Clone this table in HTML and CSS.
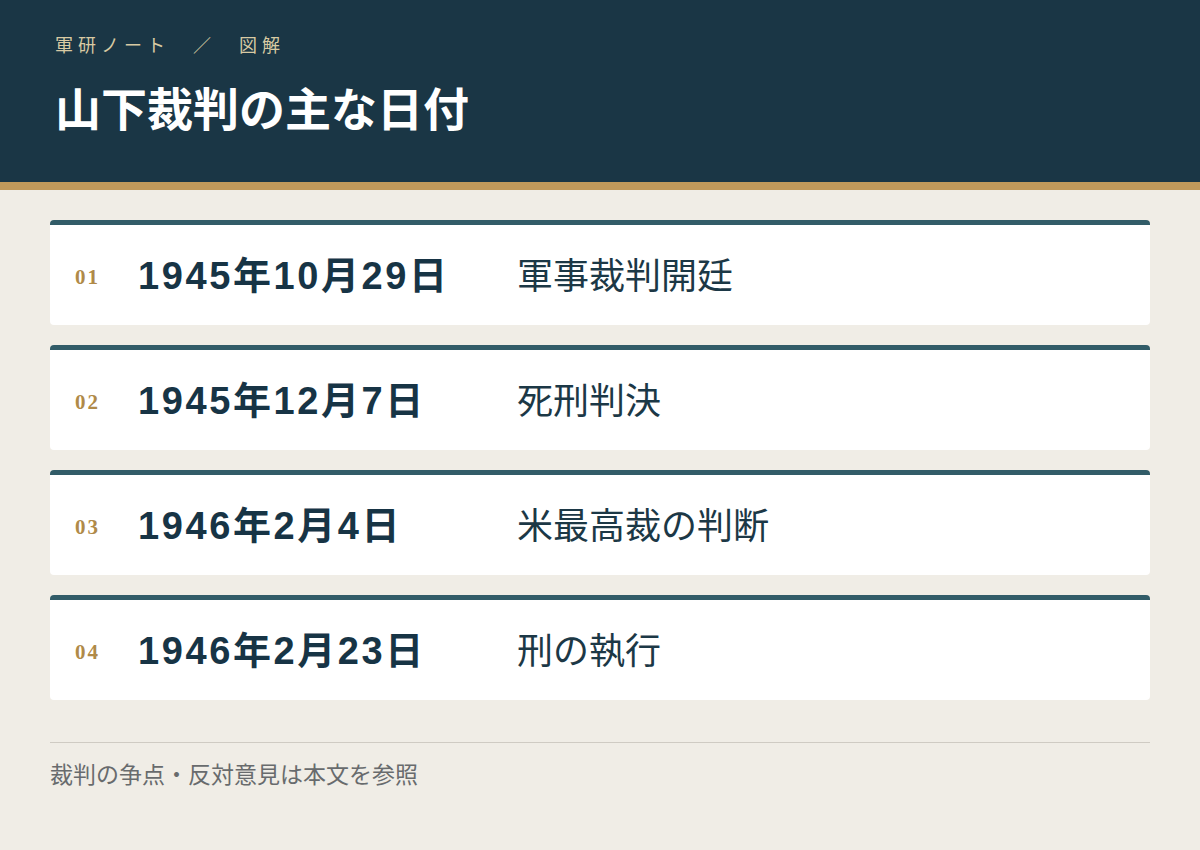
FILE: index.html
```html
<!DOCTYPE html>
<html lang="ja">
<head>
<meta charset="utf-8">
<title>山下裁判の主な日付</title>
<link rel="stylesheet" href="styles.css">
</head>
<body>
<header class="hero">
  <div class="crumb">軍研ノート　／　図解</div>
  <h1 class="title">山下裁判の主な日付</h1>
</header>
<main class="content">
  <ol class="timeline">
    <li class="card"><span class="num">01</span><span class="date">1945年10月29日</span><span class="event">軍事裁判開廷</span></li>
    <li class="card"><span class="num">02</span><span class="date">1945年12月7日</span><span class="event">死刑判決</span></li>
    <li class="card"><span class="num">03</span><span class="date">1946年2月4日</span><span class="event">米最高裁の判断</span></li>
    <li class="card"><span class="num">04</span><span class="date">1946年2月23日</span><span class="event">刑の執行</span></li>
  </ol>
  <footer class="note">裁判の争点・反対意見は本文を参照</footer>
</main>
</body>
</html>
```
FILE: styles.css
```css
* { box-sizing: border-box; }
html, body { margin: 0; padding: 0; }
body {
  background: #f0ede6;
  font-family: "Noto Sans CJK JP", "Noto Sans", sans-serif;
  color: #1a3646;
  width: 1200px;
  height: 850px;
  overflow: hidden;
}
.hero {
  background: #1a3645;
  height: 190px;
  border-bottom: 8px solid #c19a5b;
  padding: 32px 55px 0;
}
.crumb {
  color: #d8caa3;
  font-size: 18px;
  letter-spacing: 5px;
  line-height: 24px;
}
.title {
  margin: 20px 0 0;
  color: #ffffff;
  font-size: 46px;
  font-weight: 700;
  line-height: 60px;
}
.content {
  padding: 30px 50px 0;
}
.timeline {
  list-style: none;
  margin: 0;
  padding: 0;
  display: flex;
  flex-direction: column;
  gap: 20px;
}
.card {
  background: #ffffff;
  border-top: 5px solid #325c68;
  border-radius: 4px;
  height: 105px;
  display: flex;
  align-items: center;
  padding-left: 25px;
  padding-bottom: 5px;
}
.num {
  width: 63px;
  font-family: "Liberation Serif", serif;
  font-size: 21px;
  font-weight: 700;
  letter-spacing: 2px;
  color: #b08a48;
  padding-top: 10px;
}
.date {
  width: 379px;
  font-family: "Liberation Sans", "Noto Sans CJK JP", sans-serif;
  font-size: 38px;
  font-weight: 700;
  color: #173445;
  letter-spacing: 2.6px;
}
.event {
  font-size: 36px;
  font-weight: 400;
  color: #1c3846;
}
.note {
  margin-top: 42px;
  border-top: 1px solid #cfcbc3;
  padding-top: 13px;
  font-size: 23px;
  color: #686b6d;
}
```
